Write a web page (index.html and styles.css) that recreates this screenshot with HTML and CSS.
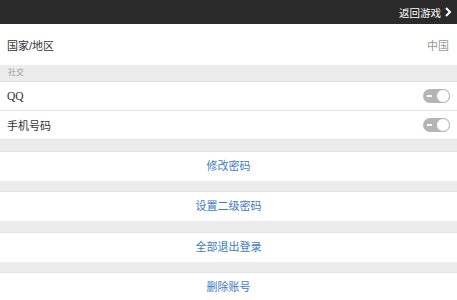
FILE: index.html
```html
<!DOCTYPE html>
<html lang="zh-CN">
<head>
  <meta charset="UTF-8">
  <title>账号设置</title>
  <link rel="stylesheet" href="styles.css">
</head>
<body>
  <div class="topbar">
    <span class="back">返回游戏</span>
    <svg class="chevron" width="8" height="10" viewBox="0 0 8 10"><path d="M2 1 L6 5 L2 9" fill="none" stroke="#fff" stroke-width="2"/></svg>
  </div>

  <div class="row region">
    <span>国家/地区</span>
    <span class="value">中国</span>
  </div>

  <div class="section-title">社交</div>
  <div class="row bind">
    <span class="latin">QQ</span>
    <span class="switch"><span class="knob"></span></span>
  </div>
  <div class="row bind">
    <span>手机号码</span>
    <span class="switch"><span class="knob"></span></span>
  </div>

  <div class="gap"></div>
  <div class="action">修改密码</div>
  <div class="gap"></div>
  <div class="action">设置二级密码</div>
  <div class="gap"></div>
  <div class="action">全部退出登录</div>
  <div class="gap"></div>
  <div class="action">删除账号</div>
</body>
</html>
```

FILE: styles.css
```css
body {
  margin: 0;
  font-family: "Liberation Sans", "Noto Sans CJK SC", sans-serif;
  background-color: #ececec;
  color: #333;
}
.topbar {
  height: 24px;
  background-color: #2a2a2a;
  display: flex;
  align-items: center;
  justify-content: flex-end;
  padding-right: 5px;
  color: #fff;
  font-size: 10.5px;
}
.topbar .chevron {
  margin-left: 3px;
}
.row {
  display: flex;
  align-items: center;
  justify-content: space-between;
  background-color: #fff;
  padding: 0 8px 0 7px;
  font-size: 11px;
}
.region {
  height: 41px;
}
.region .value {
  color: #999;
  font-size: 11px;
}
.section-title {
  height: 16px;
  line-height: 16px;
  padding-left: 8px;
  font-size: 8px;
  color: #999;
  border-bottom: 1px solid #e0e0e0;
}
.bind {
  height: 28px;
  border-bottom: 1px solid #e4e4e4;
  padding-right: 7px;
}
.latin {
  font-family: "Liberation Serif", serif;
  font-size: 11.5px;
}
.switch {
  position: relative;
  width: 27px;
  height: 14px;
  border-radius: 7px;
  background-color: #b5b5b5;
}
.switch::before {
  content: "";
  position: absolute;
  left: 4px;
  top: 6px;
  width: 5px;
  height: 2px;
  background-color: #fff;
}
.switch .knob {
  position: absolute;
  right: 0;
  top: 0;
  width: 12px;
  height: 12px;
  border-radius: 50%;
  background-color: #fff;
  border: 1px solid #b5b5b5;
}
.gap {
  height: 10.5px;
  border-bottom: 1px solid #e2e2e2;
}
.action {
  height: 29px;
  line-height: 29px;
  background-color: #fff;
  text-align: center;
  color: #3f7ac4;
  font-size: 11px;
}
```
